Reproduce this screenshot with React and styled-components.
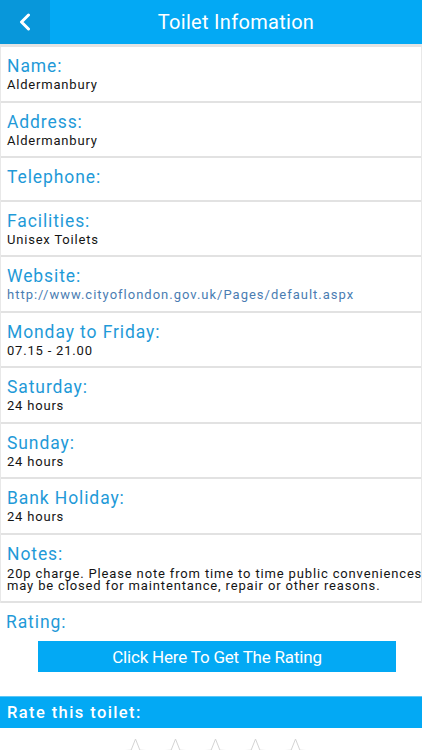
import React from "react";
import styled, { createGlobalStyle } from "styled-components";

const GlobalStyle = createGlobalStyle`
  html, body {
    margin: 0;
    padding: 0;
    background: #ffffff;
  }
  body {
    font-family: Roboto, "Noto Sans", sans-serif;
  }
`;

const Screen = styled.div`
  width: 422px;
  height: 750px;
  overflow: hidden;
  background: #ffffff;
`;

const Header = styled.div`
  display: flex;
  height: 44px;
  background: #03a9f4;
  border-bottom: 3px solid #e4e4e4;
`;

const BackButton = styled.button`
  width: 50px;
  height: 44px;
  border: none;
  padding: 0;
  background: #0897da;
  display: flex;
  align-items: center;
  justify-content: center;
  cursor: pointer;
`;

const Title = styled.h1`
  flex: 1;
  margin: 0;
  font-size: 20px;
  font-weight: 400;
  line-height: 44px;
  color: #ffffff;
  text-align: center;
  letter-spacing: 0.3px;
`;

const List = styled.div`
  border-left: 1px solid #e8e8e8;
  border-right: 1px solid #e8e8e8;
`;

const Row = styled.div`
  padding: 8px 6px 7.5px;
  border-bottom: 2px solid #e2e2e2;
`;

const Label = styled.div`
  font-size: 17.5px;
  line-height: 22px;
  color: #1f9ad8;
  letter-spacing: 0.9px;
`;

const Value = styled.div`
  font-size: 13px;
  line-height: 16px;
  color: ${({ $link }) => ($link ? "#4a7db2" : "#141414")};
  letter-spacing: ${({ $link }) => ($link ? "1px" : "0.8px")};
  min-height: 4px;
`;

const Notes = styled.div`
  width: 440px;
  padding: 3px 0 2px;
  font-size: 13px;
  line-height: 12px;
  color: #141414;
  letter-spacing: 0.85px;
`;

const RatingBlock = styled.div`
  padding: 8px 6px 24px;
`;

const RatingButton = styled.button`
  display: block;
  width: 358px;
  height: 31px;
  margin: 8px 0 0 32px;
  border: none;
  background: #03a9f4;
  color: #ffffff;
  font-family: Roboto, sans-serif;
  font-size: 17px;
  letter-spacing: -0.2px;
  cursor: pointer;
`;

const RateBar = styled.div`
  height: 31px;
  padding: 0 7px;
  background: #03a9f4;
  border-top: 1px solid #5cc6f6;
  color: #ffffff;
  font-size: 16.5px;
  font-weight: 500;
  line-height: 31px;
  letter-spacing: 1.4px;
`;

const Stars = styled.div`
  display: flex;
  justify-content: center;
  gap: 5px;
  padding: 10px 0 0 8px;
`;

const details = [
  { label: "Name:", value: "Aldermanbury" },
  { label: "Address:", value: "Aldermanbury" },
  { label: "Telephone:", value: "" },
  { label: "Facilities:", value: "Unisex Toilets" },
  { label: "Website:", value: "http://www.cityoflondon.gov.uk/Pages/default.aspx", link: true },
  { label: "Monday to Friday:", value: "07.15 - 21.00" },
  { label: "Saturday:", value: "24 hours" },
  { label: "Sunday:", value: "24 hours" },
  { label: "Bank Holiday:", value: "24 hours" },
];

const Star = () => (
  <svg width="35" height="34" viewBox="0 0 35 34">
    <path
      d="M17.5 1 L21.9 12.2 L34 12.8 L24.6 20.5 L27.8 32.3 L17.5 25.6 L7.2 32.3 L10.4 20.5 L1 12.8 L13.1 12.2 Z"
      fill="none"
      stroke="#d4d4d4"
      strokeWidth="1"
    />
  </svg>
);

const App = () => {
  return (
    <Screen>
      <GlobalStyle />
      <Header>
        <BackButton aria-label="Back">
          <svg width="14" height="18" viewBox="0 0 14 18">
            <path d="M10.5 2 L3.5 9 L10.5 16" fill="none" stroke="#ffffff" strokeWidth="3" strokeLinecap="round" strokeLinejoin="round" />
          </svg>
        </BackButton>
        <Title>Toilet Infomation</Title>
      </Header>
      <List>
        {details.map((item) => (
          <Row key={item.label}>
            <Label>{item.label}</Label>
            <Value $link={item.link}>{item.value}</Value>
          </Row>
        ))}
        <Row>
          <Label>Notes:</Label>
          <Notes>
            20p charge. Please note from time to time public conveniences may be closed for maintentance, repair or other reasons.
          </Notes>
        </Row>
      </List>
      <RatingBlock>
        <Label>Rating:</Label>
        <RatingButton>Click Here To Get The Rating</RatingButton>
      </RatingBlock>
      <RateBar>Rate this toilet:</RateBar>
      <Stars>
        {[1, 2, 3, 4, 5].map((n) => (
          <Star key={n} />
        ))}
      </Stars>
    </Screen>
  );
};

export default App;
